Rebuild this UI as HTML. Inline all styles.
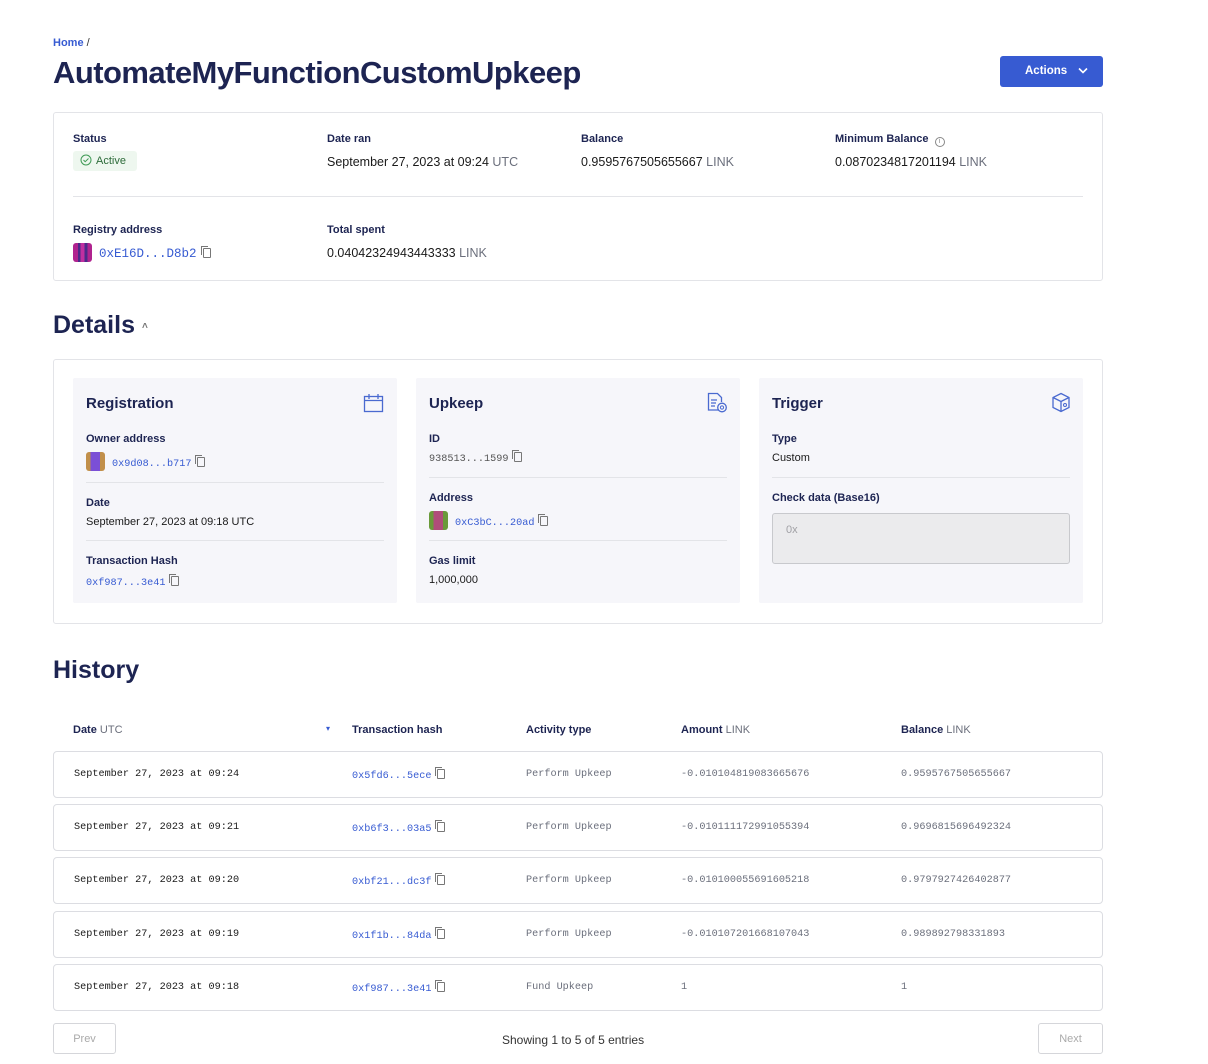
<!DOCTYPE html>
<html><head><meta charset="utf-8"><style>
*{box-sizing:border-box;margin:0;padding:0}
body{width:1208px;height:1064px;background:#fff;font-family:"Liberation Sans",sans-serif;color:#1a1a1a;position:relative;overflow:hidden}
.a{position:absolute;white-space:nowrap}
.navy{color:#1d2452}
.lbl{font-size:11px;font-weight:bold;color:#1d2452}
.val{font-size:12.5px;color:#1a1a1a}
.grey{color:#6b6f7c}
.link{color:#375bd2}
.mono{font-family:"Liberation Mono",monospace}
.card{position:absolute;border:1px solid #e3e4e8;border-radius:3px;background:#fff}
.panel{position:absolute;background:#f6f6fa;border-radius:2px}
.hr{position:absolute;height:1px;background:#e3e4e8}
.row{position:absolute;left:53px;width:1050px;height:47px;border:1px solid #dcdde2;border-radius:4px;font-size:10.2px}
.row span{position:absolute;top:17px}
.copy{display:inline-block;width:8px;height:10px;border:1px solid #777;border-radius:1px;position:relative;vertical-align:-1px;margin-left:6px}
.copy:after{content:"";position:absolute;left:-3px;top:-3px;width:6px;height:8px;border-left:1px solid #777;border-top:1px solid #777}
.av{display:inline-block;width:19px;height:19px;border-radius:3px;vertical-align:-5px;margin-right:7px}
</style></head><body>

<div class="a link" style="left:53px;top:37px;font-size:11px;font-weight:bold">Home <span style="color:#333;font-weight:normal">/</span></div>
<div class="a navy" style="left:53px;top:55px;font-size:31px;font-weight:bold;letter-spacing:-0.55px">AutomateMyFunctionCustomUpkeep</div>
<div class="a" style="left:1000px;top:56px;width:103px;height:31px;background:#375bd2;border-radius:3px;color:#fff;font-size:11.5px;font-weight:bold;line-height:31px;padding-left:25px">Actions <svg width="10" height="7" style="margin-left:8px" viewBox="0 0 10 7"><path d="M1 1.5l4 4 4-4" stroke="#fff" stroke-width="1.6" fill="none"/></svg></div>

<div class="card" style="left:53px;top:112px;width:1050px;height:169px"></div>
<div class="a lbl" style="left:73px;top:133px">Status</div>
<div class="a" style="left:73px;top:151px;width:64px;height:20px;background:#eef7ef;border-radius:3px;font-size:11px;color:#2d6b3a;line-height:20px;padding-left:7px"><svg width="12" height="12" viewBox="0 0 12 12" style="vertical-align:-2px;margin-right:4px"><circle cx="6" cy="6" r="5" stroke="#3f9a55" fill="none"/><path d="M3.5 6l1.7 1.7L8.5 4.5" stroke="#3f9a55" fill="none"/></svg>Active</div>
<div class="a lbl" style="left:327px;top:133px">Date ran</div>
<div class="a val" style="left:327px;top:155px">September 27, 2023 at 09:24 <span class="grey">UTC</span></div>
<div class="a lbl" style="left:581px;top:133px">Balance</div>
<div class="a val" style="left:581px;top:155px">0.9595767505655667 <span class="grey">LINK</span></div>
<div class="a lbl" style="left:835px;top:133px">Minimum Balance <span style="display:inline-block;width:10px;height:10px;border:1px solid #888;border-radius:50%;font-size:7px;line-height:8px;text-align:center;color:#888;margin-left:3px;vertical-align:-1px;font-weight:normal">i</span></div>
<div class="a val" style="left:835px;top:155px">0.0870234817201194 <span class="grey">LINK</span></div>
<div class="hr" style="left:73px;top:196px;width:1010px"></div>
<div class="a lbl" style="left:73px;top:224px">Registry address</div>
<div class="a mono link" style="left:73px;top:243px;font-size:12.5px"><span class="av" style="background:linear-gradient(90deg,#b0238f 25%,#4b2a8a 25% 40%,#c02fa0 40% 60%,#4b2a8a 60% 75%,#b0238f 75%)"></span>0xE16D...D8b2<span class="copy"></span></div>
<div class="a lbl" style="left:327px;top:224px">Total spent</div>
<div class="a val" style="left:327px;top:246px">0.04042324943443333 <span class="grey">LINK</span></div>

<div class="a navy" style="left:53px;top:311px;font-size:25px;font-weight:bold">Details <span style="font-size:10px;color:#777;vertical-align:4px">˄</span></div>

<div class="card" style="left:53px;top:359px;width:1050px;height:265px"></div>
<div class="panel" style="left:73px;top:378px;width:324px;height:225px"></div>
<div class="panel" style="left:416px;top:378px;width:324px;height:225px"></div>
<div class="panel" style="left:759px;top:378px;width:324px;height:225px"></div>

<div class="a navy" style="left:86px;top:395px;font-size:15px;font-weight:bold">Registration</div>
<svg class="a" style="left:363px;top:393px" width="21" height="20" viewBox="0 0 21 20"><rect x="1.5" y="3.5" width="18" height="15" stroke="#4a6ad0" stroke-width="1.3" fill="none"/><path d="M1.5 7.5h18M6 1v5M15 1v5" stroke="#4a6ad0" stroke-width="1.3"/></svg>
<div class="a lbl" style="left:86px;top:433px">Owner address</div>
<div class="a mono link" style="left:86px;top:452px;font-size:10.2px"><span class="av" style="background:linear-gradient(90deg,#c18f4a 25%,#7b4fd6 25% 75%,#c18f4a 75%)"></span>0x9d08...b717<span class="copy"></span></div>
<div class="hr" style="left:86px;top:482px;width:298px"></div>
<div class="a lbl" style="left:86px;top:497px">Date</div>
<div class="a" style="left:86px;top:516px;font-size:11px">September 27, 2023 at 09:18 UTC</div>
<div class="hr" style="left:86px;top:540px;width:298px"></div>
<div class="a lbl" style="left:86px;top:555px">Transaction Hash</div>
<div class="a mono link" style="left:86px;top:576px;font-size:10.2px">0xf987...3e41<span class="copy"></span></div>

<div class="a navy" style="left:429px;top:395px;font-size:15px;font-weight:bold">Upkeep</div>
<svg class="a" style="left:706px;top:392px" width="22" height="22" viewBox="0 0 22 22"><path d="M13 18H2.5V1.5h9l4 4V10" stroke="#4a6ad0" stroke-width="1.3" fill="none"/><path d="M5 8h6M5 11h5M5 14h4" stroke="#4a6ad0" stroke-width="1.2"/><circle cx="16" cy="15.5" r="4.3" stroke="#4a6ad0" stroke-width="1.3" fill="none"/><circle cx="16" cy="15.5" r="1.6" stroke="#4a6ad0" fill="none"/></svg>
<div class="a lbl" style="left:429px;top:433px">ID</div>
<div class="a mono" style="left:429px;top:452px;font-size:10.2px;color:#555">938513...1599<span class="copy"></span></div>
<div class="hr" style="left:429px;top:477px;width:298px"></div>
<div class="a lbl" style="left:429px;top:492px">Address</div>
<div class="a mono link" style="left:429px;top:511px;font-size:10.2px"><span class="av" style="background:linear-gradient(90deg,#6a9a3a 25%,#b04d7a 25% 75%,#6a9a3a 75%)"></span>0xC3bC...20ad<span class="copy"></span></div>
<div class="hr" style="left:429px;top:540px;width:298px"></div>
<div class="a lbl" style="left:429px;top:555px">Gas limit</div>
<div class="a" style="left:429px;top:574px;font-size:11px">1,000,000</div>

<div class="a navy" style="left:772px;top:395px;font-size:15px;font-weight:bold">Trigger</div>
<svg class="a" style="left:1051px;top:392px" width="20" height="21" viewBox="0 0 20 21"><path d="M10 1.5l8 4v10l-8 4-8-4v-10z M2 5.5l8 4 8-4M10 9.5v10" stroke="#4a6ad0" stroke-width="1.3" fill="none"/><circle cx="14" cy="13" r="1.5" stroke="#4a6ad0" fill="none"/></svg>
<div class="a lbl" style="left:772px;top:433px">Type</div>
<div class="a" style="left:772px;top:452px;font-size:11px">Custom</div>
<div class="hr" style="left:772px;top:477px;width:298px"></div>
<div class="a lbl" style="left:772px;top:492px">Check data (Base16)</div>
<div class="a" style="left:772px;top:513px;width:298px;height:51px;background:#ebebed;border:1px solid #c8c9cd;border-radius:3px;font-size:11px;color:#a0a0a5;padding:10px 13px">0x</div>

<div class="a navy" style="left:53px;top:656px;font-size:25px;font-weight:bold">History</div>

<div class="a lbl" style="left:73px;top:724px">Date <span class="grey" style="font-weight:normal">UTC</span></div>
<div class="a" style="left:326px;top:724px;font-size:8px;color:#375bd2">▾</div>
<div class="a lbl" style="left:352px;top:724px">Transaction hash</div>
<div class="a lbl" style="left:526px;top:724px">Activity type</div>
<div class="a lbl" style="left:681px;top:724px">Amount <span class="grey" style="font-weight:normal">LINK</span></div>
<div class="a lbl" style="left:901px;top:724px">Balance <span class="grey" style="font-weight:normal">LINK</span></div>

<div class="row mono" style="top:751px"><span style="left:20px">September 27, 2023 at 09:24</span><span class="link" style="left:298px">0x5fd6...5ece<i class="copy"></i></span><span class="grey" style="left:472px">Perform Upkeep</span><span class="grey" style="left:627px">-0.010104819083665676</span><span class="grey" style="left:847px">0.9595767505655667</span></div>
<div class="row mono" style="top:804px"><span style="left:20px">September 27, 2023 at 09:21</span><span class="link" style="left:298px">0xb6f3...03a5<i class="copy"></i></span><span class="grey" style="left:472px">Perform Upkeep</span><span class="grey" style="left:627px">-0.010111172991055394</span><span class="grey" style="left:847px">0.9696815696492324</span></div>
<div class="row mono" style="top:857px"><span style="left:20px">September 27, 2023 at 09:20</span><span class="link" style="left:298px">0xbf21...dc3f<i class="copy"></i></span><span class="grey" style="left:472px">Perform Upkeep</span><span class="grey" style="left:627px">-0.010100055691605218</span><span class="grey" style="left:847px">0.9797927426402877</span></div>
<div class="row mono" style="top:911px"><span style="left:20px">September 27, 2023 at 09:19</span><span class="link" style="left:298px">0x1f1b...84da<i class="copy"></i></span><span class="grey" style="left:472px">Perform Upkeep</span><span class="grey" style="left:627px">-0.010107201668107043</span><span class="grey" style="left:847px">0.989892798331893</span></div>
<div class="row mono" style="top:964px"><span style="left:20px">September 27, 2023 at 09:18</span><span class="link" style="left:298px">0xf987...3e41<i class="copy"></i></span><span class="grey" style="left:472px">Fund Upkeep</span><span class="grey" style="left:627px">1</span><span class="grey" style="left:847px">1</span></div>

<div class="a" style="left:53px;top:1023px;width:63px;height:31px;border:1px solid #d5d6da;border-radius:3px;font-size:11px;color:#aaa;text-align:center;line-height:30px">Prev</div>
<div class="a" style="left:502px;top:1033px;font-size:12px;color:#333">Showing 1 to 5 of 5 entries</div>
<div class="a" style="left:1038px;top:1023px;width:65px;height:31px;border:1px solid #d5d6da;border-radius:3px;font-size:11px;color:#aaa;text-align:center;line-height:30px">Next</div>
</body></html>
